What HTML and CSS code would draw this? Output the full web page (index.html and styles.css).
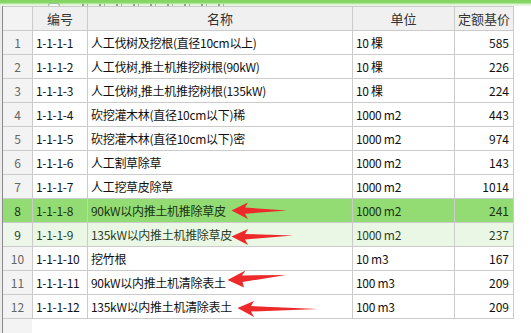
FILE: index.html
```html
<!DOCTYPE html>
<html lang="zh-CN">
<head>
<meta charset="utf-8">
<title>定额</title>
<link rel="stylesheet" href="styles.css">
</head>
<body>
<div class="page">
  <div class="topbar"><span class="tab"></span><span class="specks"></span></div>
  <div class="sheet">
    <div class="gutter"></div>
    <div class="area">
      <div class="grid">
        <div class="row head"><div class="num"></div><div class="c">编号</div><div class="c">名称</div><div class="c">单位</div><div class="c">定额基价</div></div>
        <div class="row"><div class="num">1</div><div>1-1-1-1</div><div>人工伐树及挖根(直径10cm以上)</div><div>10 棵</div><div class="r">585</div></div>
        <div class="row"><div class="num">2</div><div>1-1-1-2</div><div>人工伐树,推土机推挖树根(90kW)</div><div>10 棵</div><div class="r">226</div></div>
        <div class="row"><div class="num">3</div><div>1-1-1-3</div><div>人工伐树,推土机推挖树根(135kW)</div><div>10 棵</div><div class="r">224</div></div>
        <div class="row"><div class="num">4</div><div>1-1-1-4</div><div>砍挖灌木林(直径10cm以下)稀</div><div>1000 m2</div><div class="r">443</div></div>
        <div class="row"><div class="num">5</div><div>1-1-1-5</div><div>砍挖灌木林(直径10cm以下)密</div><div>1000 m2</div><div class="r">974</div></div>
        <div class="row"><div class="num">6</div><div>1-1-1-6</div><div>人工割草除草</div><div>1000 m2</div><div class="r">143</div></div>
        <div class="row"><div class="num">7</div><div>1-1-1-7</div><div>人工挖草皮除草</div><div>1000 m2</div><div class="r">1014</div></div>
        <div class="row sel"><div class="num">8</div><div>1-1-1-8</div><div>90kW以内推土机推除草皮</div><div>1000 m2</div><div class="r">241</div></div>
        <div class="row hov"><div class="num">9</div><div>1-1-1-9</div><div>135kW以内推土机推除草皮</div><div>1000 m2</div><div class="r">237</div></div>
        <div class="row"><div class="num">10</div><div>1-1-1-10</div><div>挖竹根</div><div>10 m3</div><div class="r">167</div></div>
        <div class="row"><div class="num">11</div><div>1-1-1-11</div><div>90kW以内推土机清除表土</div><div>100 m3</div><div class="r">209</div></div>
        <div class="row"><div class="num">12</div><div>1-1-1-12</div><div>135kW以内推土机清除表土</div><div>100 m3</div><div class="r">209</div></div>
      </div>
    </div>
  </div>
  <svg class="arrows" width="531" height="333" viewBox="0 0 531 333">
    <g fill="#ec2a2a">
      <path d="M231.5 210.5 L248 202.5 L245 207.5 L287 210.5 L245 213.8 L248 219 Z"/>
      <path d="M231.5 236.5 L248 229 L245 234 L293 235.5 L245 239.5 L248 245 Z"/>
      <path d="M227.5 280 L245.5 270.5 L242 275.5 L286 275 L242.5 282 L244 287.5 Z"/>
      <path d="M237.5 308 L254 301 L251 306 L318 309 L251 311.5 L254 317 Z"/>
    </g>
  </svg>
</div>
</body>
</html>
```

FILE: styles.css
```css
* { box-sizing: border-box; }
html, body { margin: 0; padding: 0; background: #ffffff; }
body {
  font-family: "Noto Sans CJK SC", "Noto Sans", sans-serif;
  font-size: 12px;
  color: #111;
}
.page {
  position: relative;
  width: 531px;
  height: 333px;
  overflow: hidden;
  display: flex;
  flex-direction: column;
}
.topbar {
  position: relative;
  height: 6px;
  flex: none;
  background: linear-gradient(to bottom, #84d462 0, #8ad86a 3px, #d9f1cd 4px, #eef8ea 6px);
  overflow: hidden;
}
.topbar .tab {
  position: absolute;
  left: 48px;
  top: 3px;
  width: 12px;
  height: 6px;
  border: 1px solid #9fbf94;
  border-bottom: none;
  background: #f4fbf1;
  border-radius: 3px 3px 0 0;
}
.topbar .specks {
  position: absolute;
  left: 82px;
  top: 4px;
  width: 150px;
  height: 2px;
  background: repeating-linear-gradient(to right, #6f7f6a 0, #6f7f6a 2px, transparent 2px, transparent 5px, #8a9985 5px, #8a9985 6px, transparent 6px, transparent 17px);
  opacity: 0.7;
}
.sheet {
  flex: 1;
  display: flex;
  min-height: 0;
}
.gutter {
  width: 3px;
  flex: none;
  background: #ececec;
  border-right: 1px solid #8a8a8a;
}
.area {
  flex: 1;
  background: linear-gradient(to right, #f3f3f3 0, #f3f3f3 29px, #ffffff 29px);
}
.grid {
  display: grid;
  grid-template-columns: 29px 54px 264px 101px 58px;
  grid-auto-rows: 23px;
  gap: 1px;
  width: 511px;
  background: #cbcbcb;
  border-top: 1px solid #cbcbcb;
  border-right: 1px solid #cbcbcb;
  border-bottom: 1px solid #cbcbcb;
}
.row { display: contents; }
.row > div {
  background: #ffffff;
  padding: 0 3px;
  line-height: 23px;
  white-space: nowrap;
  overflow: hidden;
  letter-spacing: -0.3px;
}
.row > .num {
  background: #f3f3f3;
  color: #666;
  text-align: center;
  padding: 0;
  letter-spacing: 0;
}
.row > .r { text-align: right; padding-right: 4px; letter-spacing: 0; }
.head > div {
  background: #f0f0f0;
  color: #333;
  font-size: 13px;
  text-align: center;
  letter-spacing: 0;
}
.sel > div, .sel > .num { background: #92dc73; color: #1b3312; }
.hov > div, .hov > .num { background: #ebf7e5; color: #2b3f27; }
.hov > .num { background: #eef5ea; }
.arrows {
  position: absolute;
  left: 0;
  top: 0;
  pointer-events: none;
}
```
